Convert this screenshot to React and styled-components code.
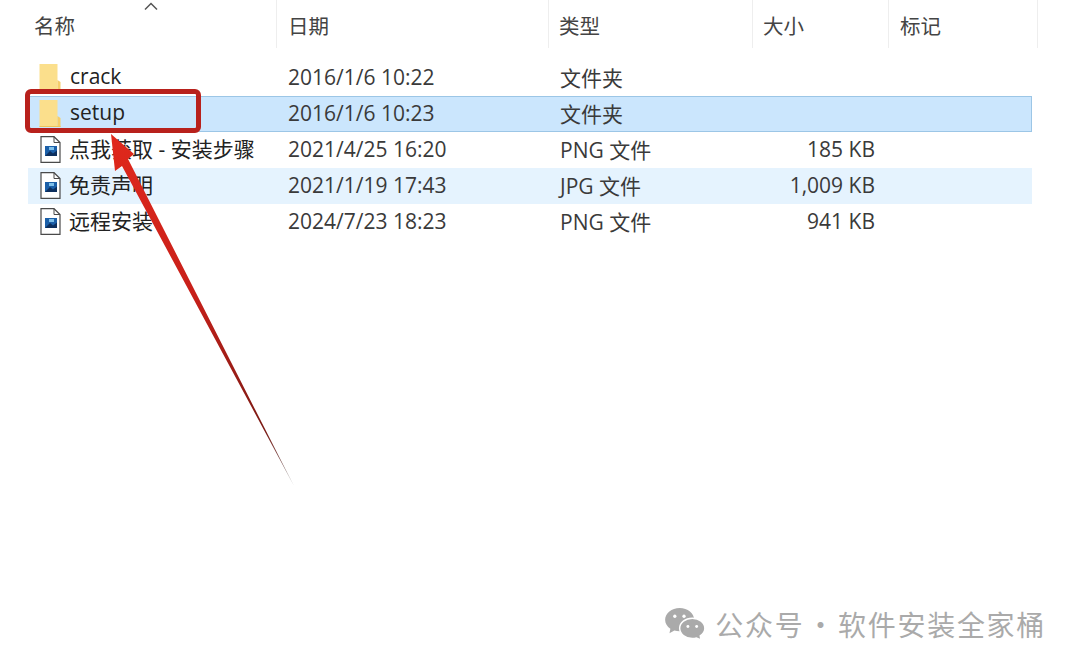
import React from 'react';
import styled, { createGlobalStyle } from 'styled-components';

const Global = createGlobalStyle`
  html, body { margin: 0; padding: 0; background: #fff; }
  #root { width: 1080px; height: 668px; overflow: hidden; }
`;

const Page = styled.div`
  position: relative;
  width: 1080px;
  height: 668px;
  display: flex;
  flex-direction: column;
  background: #fff;
  color: #333;
  font-family: "Open Sans", "Noto Sans CJK SC", sans-serif;
  font-size: 21px;
`;

const columns = '249px 272px 204px 136px 1fr';

const Header = styled.div`
  display: grid;
  grid-template-columns: ${columns};
  width: 1010px;
  height: 48px;
  margin-left: 28px;
  margin-bottom: 12px;
`;

const HeaderCell = styled.div`
  position: relative;
  display: flex;
  align-items: center;
  box-sizing: border-box;
  height: 48px;
  padding-left: ${(p) => p.$pad}px;
  padding-top: 2px;
  border-right: 1px solid #eeeeee;
  font-size: 20.5px;
  color: #444;
`;

const SortCaret = styled.svg`
  position: absolute;
  left: 115px;
  top: 1px;
`;

const Rows = styled.div`
  margin-left: 28px;
  width: 1004px;
`;

const Row = styled.div`
  display: grid;
  grid-template-columns: ${columns};
  align-items: center;
  height: 36px;
  box-sizing: border-box;
  background: ${(p) => (p.$kind === 'selected' ? '#cbe6fd' : p.$kind === 'hover' ? '#e5f3fe' : 'transparent')};
  ${(p) => (p.$kind === 'selected' ? 'border: 1px solid #9cc6e6; border-left: none;' : '')}
`;

const NameCell = styled.div`
  display: flex;
  align-items: center;
  padding-left: ${(p) => p.$pad}px;
  padding-bottom: 2px;
  gap: ${(p) => p.$gap}px;
  white-space: nowrap;
`;

const NameText = styled.span`
  padding-bottom: 2px;
  color: #222;
`;

const Cell = styled.div`
  padding-left: 11px;
  padding-bottom: 3px;
  white-space: nowrap;
  color: #3a3a3a;
`;

const SizeCell = styled.div`
  text-align: right;
  padding-right: 14px;
  padding-bottom: 3px;
  white-space: nowrap;
  color: #3a3a3a;
`;

const Watermark = styled.div`
  margin-top: auto;
  margin-bottom: 24px;
  margin-right: 34px;
  display: flex;
  align-items: center;
  justify-content: flex-end;
  gap: 10px;
  color: #aaaaaa;
  font-family: "Noto Sans CJK SC", sans-serif;
  font-size: 28px;
  letter-spacing: 1.7px;
  word-spacing: -6px;
`;

const RedBox = styled.div`
  position: absolute;
  left: 25px;
  top: 89px;
  width: 176px;
  height: 44px;
  box-sizing: border-box;
  border: 5px solid #b8211c;
  border-radius: 6px;
`;

const ArrowSvg = styled.svg`
  position: absolute;
  left: 0;
  top: 0;
  pointer-events: none;
`;

const FolderIcon = () => (
  <svg width="22" height="27" viewBox="0 0 22 27">
    <path d="M0.500 0H18.500V27H0.500Z" fill="#fbdf8c" />
    <path d="M18.500 16l3 2V27h-3Z" fill="#f5cd6a" />
    <path d="M0.500 26.500H21.500" stroke="#eec35a" strokeWidth="1" />
  </svg>
);

const ImageIcon = () => (
  <svg width="21" height="27" viewBox="0 0 21 27">
    <path d="M1 .7H14L20 6.500V26.300H1Z" fill="#fff" stroke="#4a4a4a" strokeWidth="1.200" />
    <path d="M14 .7V6.500H20" fill="none" stroke="#4a4a4a" strokeWidth="1" />
    <rect x="5" y="10" width="12" height="10" fill="#1b5fa8" />
    <path d="M5 20L10 15l3 2.500 4-3V20Z" fill="#0d2f5e" />
    <rect x="9" y="11" width="5" height="3" fill="#7fc0ea" />
  </svg>
);

const WeChat = () => (
  <svg width="40" height="32" viewBox="0 0 41 33">
    <path d="M15 0C6.700 0 0 5.400 0 12.200c0 3.800 2.100 7.100 5.400 9.300L4.500 26l5-2.800c1.700.5 3.500.8 5.500.8 8.300 0 15-5.300 15-11.800S23.300 0 15 0Z" fill="#aaa" />
    <path d="M28 10.500c-7.200 0-13 4.700-13 10.500s5.800 10.500 13 10.500c1.500 0 3-.2 4.300-.6L37 33l-.8-4.200c2.900-1.900 4.800-4.700 4.800-7.800 0-5.800-5.800-10.500-13-10.500Z" fill="#aaa" stroke="#fff" strokeWidth="1.500" />
    <circle cx="10" cy="8.500" r="1.700" fill="#fff" />
    <circle cx="19.500" cy="8.500" r="1.700" fill="#fff" />
    <circle cx="23.500" cy="19" r="1.500" fill="#fff" />
    <circle cx="32.500" cy="19" r="1.500" fill="#fff" />
  </svg>
);

const files = [
  { name: 'crack', date: '2016/1/6 10:22', type: '文件夹', size: '', folder: true },
  { name: 'setup', date: '2016/1/6 10:23', type: '文件夹', size: '', folder: true, kind: 'selected' },
  { name: '点我获取 - 安装步骤', date: '2021/4/25 16:20', type: 'PNG 文件', size: '185 KB' },
  { name: '免责声明', date: '2021/1/19 17:43', type: 'JPG 文件', size: '1,009 KB', kind: 'hover' },
  { name: '远程安装', date: '2024/7/23 18:23', type: 'PNG 文件', size: '941 KB' },
];

const heads = [
  { label: '名称', pad: 6 },
  { label: '日期', pad: 11 },
  { label: '类型', pad: 10 },
  { label: '大小', pad: 10 },
  { label: '标记', pad: 11 },
];

export default function App() {
  return (
    <Page>
      <Global />
      <Header>
        {heads.map((h, i) => (
          <HeaderCell key={h.label} $pad={h.pad}>
            {i === 0 && (
              <SortCaret width="16" height="10" viewBox="0 0 16 10">
                <path d="M2 8.500L8 2.500l6 6" fill="none" stroke="#555" strokeWidth="1.500" />
              </SortCaret>
            )}
            {h.label}
          </HeaderCell>
        ))}
      </Header>
      <Rows>
        {files.map((f) => (
          <Row key={f.name} $kind={f.kind}>
            <NameCell $pad={f.folder ? 11 : 12} $gap={f.folder ? 9 : 8}>
              {f.folder ? <FolderIcon /> : <ImageIcon />}
              <NameText>{f.name}</NameText>
            </NameCell>
            <Cell>{f.date}</Cell>
            <Cell>{f.type}</Cell>
            <SizeCell>{f.size}</SizeCell>
            <div />
          </Row>
        ))}
      </Rows>
      <Watermark>
        <WeChat />
        <span>公众号 · 软件安装全家桶</span>
      </Watermark>
      <RedBox />
      <ArrowSvg width="1080" height="668" viewBox="0 0 1080 668">
        <defs>
          <linearGradient id="shaft" x1="112" y1="136" x2="293" y2="483" gradientUnits="userSpaceOnUse">
            <stop offset="0" stopColor="#e0281c" />
            <stop offset="0.45" stopColor="#c8201a" />
            <stop offset="0.85" stopColor="#7a1a14" />
            <stop offset="1" stopColor="#8a8a8a" />
          </linearGradient>
        </defs>
        <path d="M111 134L134 154 128 159 294 486 122 166 115 171Z" fill="url(#shaft)" />
      </ArrowSvg>
    </Page>
  );
}
